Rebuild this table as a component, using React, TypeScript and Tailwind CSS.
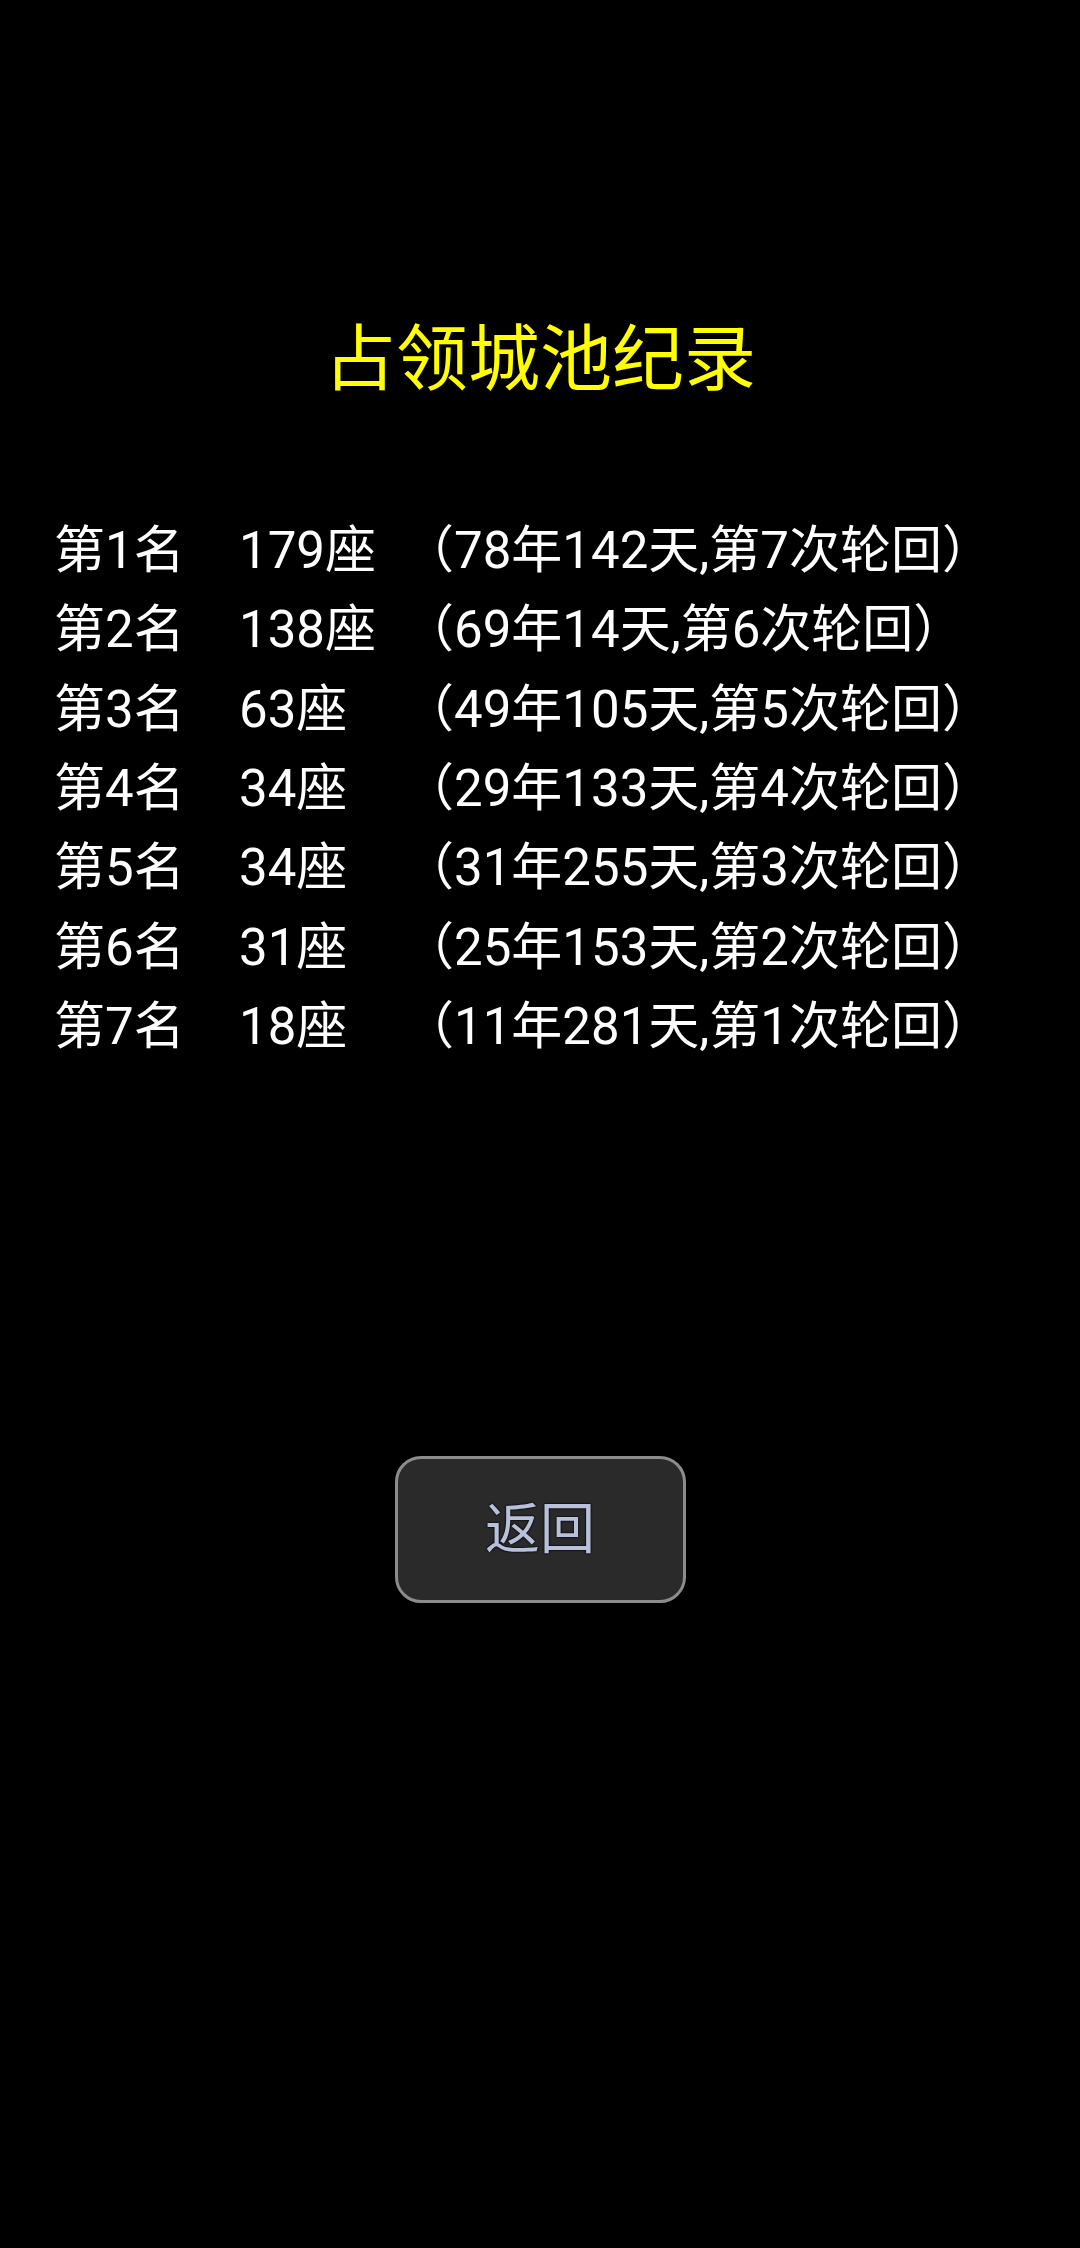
const records = [
  { rank: '第1名', cities: '179座', detail: '（78年142天,第7次轮回）' },
  { rank: '第2名', cities: '138座', detail: '（69年14天,第6次轮回）' },
  { rank: '第3名', cities: '63座', detail: '（49年105天,第5次轮回）' },
  { rank: '第4名', cities: '34座', detail: '（29年133天,第4次轮回）' },
  { rank: '第5名', cities: '34座', detail: '（31年255天,第3次轮回）' },
  { rank: '第6名', cities: '31座', detail: '（25年153天,第2次轮回）' },
  { rank: '第7名', cities: '18座', detail: '（11年281天,第1次轮回）' },
];

export default function App() {
  return (
    <div className="flex min-h-[2248px] w-full flex-col bg-black font-['Roboto','Noto_Sans_CJK_SC',sans-serif]">
      <h1 className="pt-[324px] text-center text-[72px] font-normal leading-[72px] text-[#ffff00]">
        占领城池纪录
      </h1>

      <div className="mt-[115px] flex flex-col pl-[54px]">
        {records.map((r) => (
          <div
            key={r.rank}
            className="grid h-[79.3px] grid-cols-[185px_164px_1fr] items-center text-[51px] leading-none text-white"
          >
            <span>{r.rank}</span>
            <span>{r.cities}</span>
            <span>{r.detail}</span>
          </div>
        ))}
      </div>

      <div className="mt-[390px] flex justify-center">
        <button
          type="button"
          className="flex h-[147px] w-[291px] items-center justify-center rounded-[26px] border-[3px] border-[#8c8c8c] bg-[#2a2a2a] text-[55px] leading-none text-[#b8c0dc] [text-shadow:0_0_2px_#000,0_0_2px_#000]"
        >
          返回
        </button>
      </div>
    </div>
  );
}
